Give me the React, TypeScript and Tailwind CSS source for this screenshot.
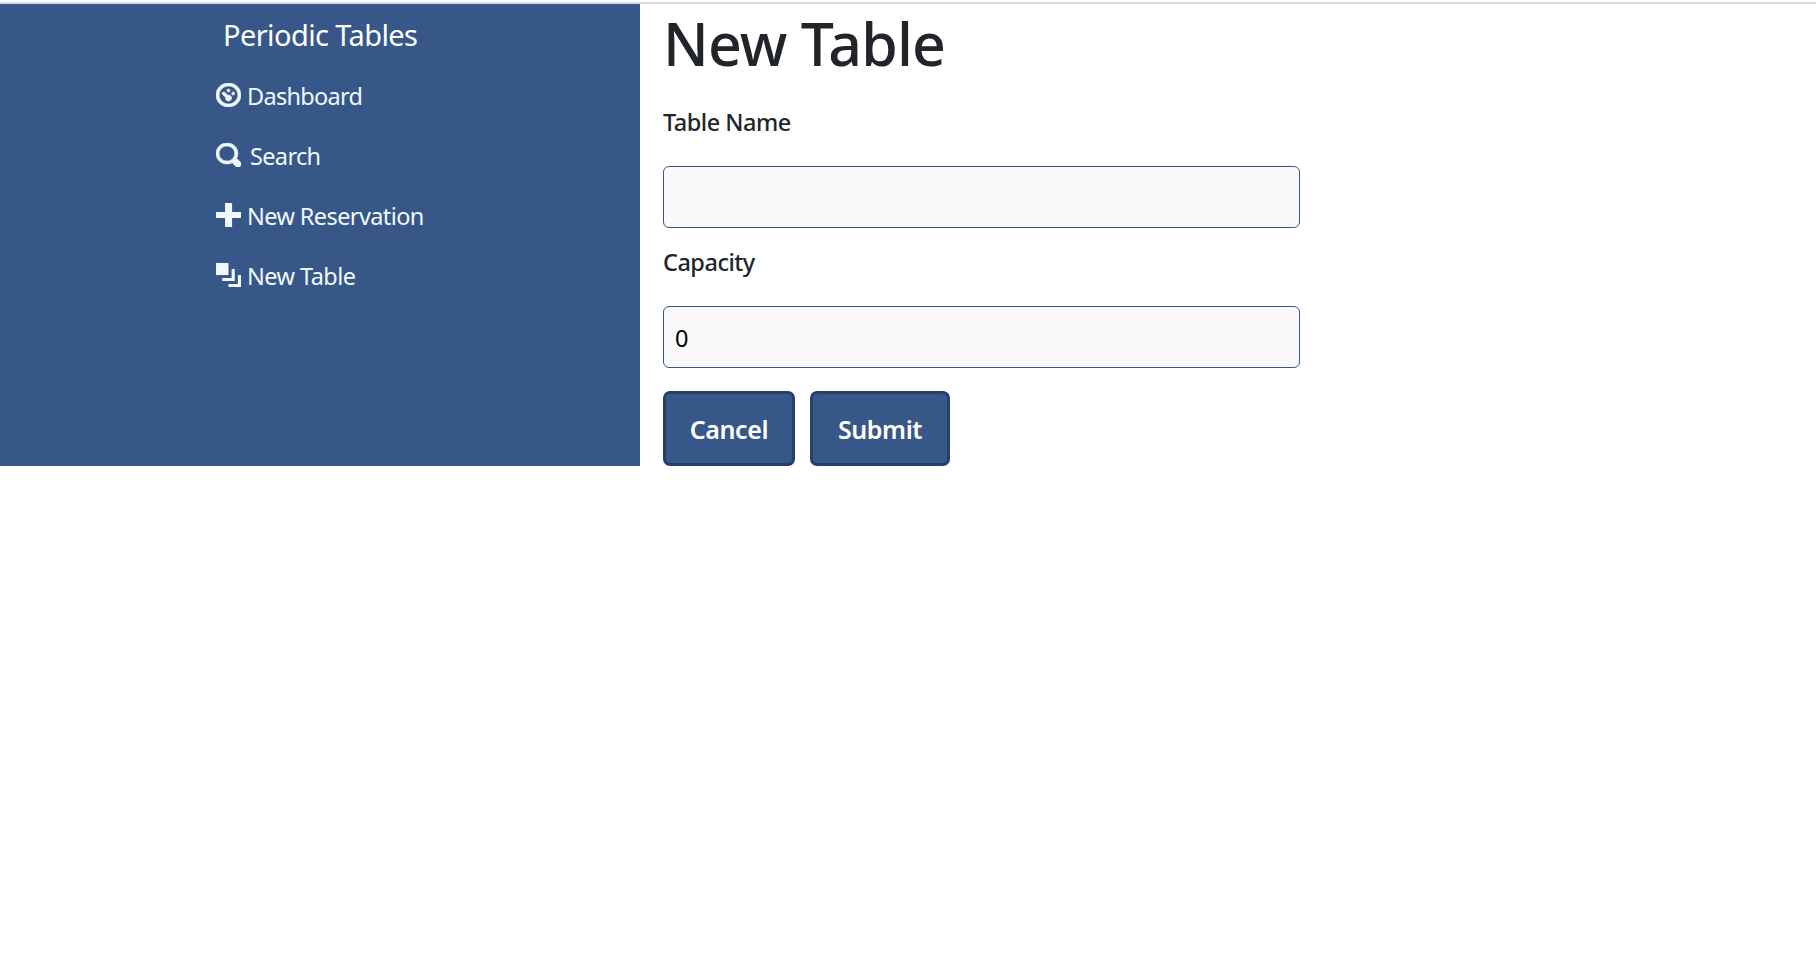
import React from "react";

const iconPaths = {
  dashboard:
    "M4 0c-2.2 0-4 1.8-4 4s1.8 4 4 4 4-1.8 4-4-1.8-4-4-4zm0 1c1.66 0 3 1.34 3 3s-1.34 3-3 3-3-1.34-3-3 1.34-3 3-3zm0 1c-.28 0-.5.22-.5.5s.22.5.5.5.5-.22.5-.5-.22-.5-.5-.5zm-1.66 1a.5.5 0 0 0-.19.84l.91.91c-.02.08-.06.16-.06.25 0 .55.45 1 1 1s1-.45 1-1-.45-1-1-1c-.09 0-.17.04-.25.06l-.91-.91a.5.5 0 0 0-.44-.16.5.5 0 0 0-.06 0zm3.16 0c-.28 0-.5.22-.5.5s.22.5.5.5.5-.22.5-.5-.22-.5-.5-.5z",
  search:
    "M3.5 0c-1.93 0-3.5 1.57-3.5 3.5s1.57 3.5 3.5 3.5c.59 0 1.17-.14 1.66-.41a1 1 0 0 0 .13.13l1 1a1.02 1.02 0 1 0 1.44-1.44l-1-1a1 1 0 0 0-.16-.13c.27-.49.44-1.06.44-1.66 0-1.93-1.55-3.5-3.5-3.5zm0 1c1.39 0 2.5 1.11 2.5 2.5 0 .66-.24 1.27-.66 1.72-.01.01-.02.02-.03.03a1 1 0 0 0-.13.13c-.44.4-1.04.63-1.69.63-1.39 0-2.5-1.11-2.5-2.5s1.11-2.5 2.5-2.5z",
  plus: "M2.9 0v3h-2.9v2h2.9v3h2.25v-3h2.85v-2h-2.85v-3h-2.25z",
  layers: "M0 0v4h4v-4h-4zm5 2v3h-3v1h4v-4h-1zm2 2v3h-3v1h4v-4h-1z",
};

const links: { icon: keyof typeof iconPaths; label: string; text: string; stroke: string }[] = [
  { icon: "dashboard", label: "Dashboard", text: "ml-[6px] tracking-[-0.7px]", stroke: "stroke-current" },
  { icon: "search", label: "Search", text: "ml-[9px] tracking-[-0.65px]", stroke: "stroke-current" },
  { icon: "plus", label: "New Reservation", text: "ml-[6px] tracking-[-0.6px]", stroke: "stroke-none" },
  { icon: "layers", label: "New Table", text: "ml-[6px] tracking-[-0.55px]", stroke: "stroke-none" },
];

function Sidebar() {
  return (
    <nav className="w-[640px] shrink-0 bg-[#375788] text-white">
      <a href="#" className="block pl-[223px] pt-[11px] text-[29px] leading-10 tracking-[-0.6px]">
        Periodic Tables
      </a>
      <ul className="mt-[11px] pl-[216px] text-[#f0f8ff]">
        {links.map((link) => (
          <li key={link.label} className="flex h-[60px] items-center">
            <svg
              viewBox="0 0 8 8"
              preserveAspectRatio="none"
              strokeWidth={0.2}
              className={`-mt-[2px] h-6 w-[25px] fill-current ${link.stroke}`}
            >
              <path d={iconPaths[link.icon]} />
            </svg>
            <span className={`text-[23.5px] leading-9 ${link.text}`}>{link.label}</span>
          </li>
        ))}
      </ul>
    </nav>
  );
}

function Field({ id, label, value }: { id: string; label: string; value: string }) {
  return (
    <div className="mb-4">
      <label htmlFor={id} className="mb-[26px] block text-[23.5px] font-medium leading-9 tracking-[-0.5px] text-[#212529]">
        {label}
      </label>
      <input
        id={id}
        defaultValue={value}
        className="block h-[62px] w-[637px] rounded-[6px] border border-[#375788] bg-[#f9f9f9] px-[11px] pt-[2px] text-[23.5px] text-black outline-none"
      />
    </div>
  );
}

const buttonClass =
  "h-[75px] rounded-[7px] border-[3px] border-[#263f69] bg-[#375788] pt-[2px] text-[25px] font-semibold text-white";

export default function App() {
  return (
    <div className="min-h-[971px] bg-white pt-[2px] font-['Noto_Sans','Open_Sans',sans-serif]">
      <div className="h-[2px] bg-[#dadbdd]" />
      <div className="flex h-[462px]">
        <Sidebar />
        <main className="pl-[23px]">
          <h1 className="mb-[25px] pt-[3px] text-[59px] font-medium leading-[72px] tracking-[-0.9px] text-[#212529]">New Table</h1>
          <form onSubmit={(event) => event.preventDefault()}>
            <Field id="table-name" label="Table Name" value="" />
            <Field id="capacity" label="Capacity" value="0" />
            <div className="mt-[23px] flex gap-[15px]">
              <button type="button" className={`${buttonClass} w-[132px] tracking-[-0.4px]`}>
                Cancel
              </button>
              <button type="submit" className={`${buttonClass} w-[140px] tracking-[-0.4px]`}>
                Submit
              </button>
            </div>
          </form>
        </main>
      </div>
    </div>
  );
}
